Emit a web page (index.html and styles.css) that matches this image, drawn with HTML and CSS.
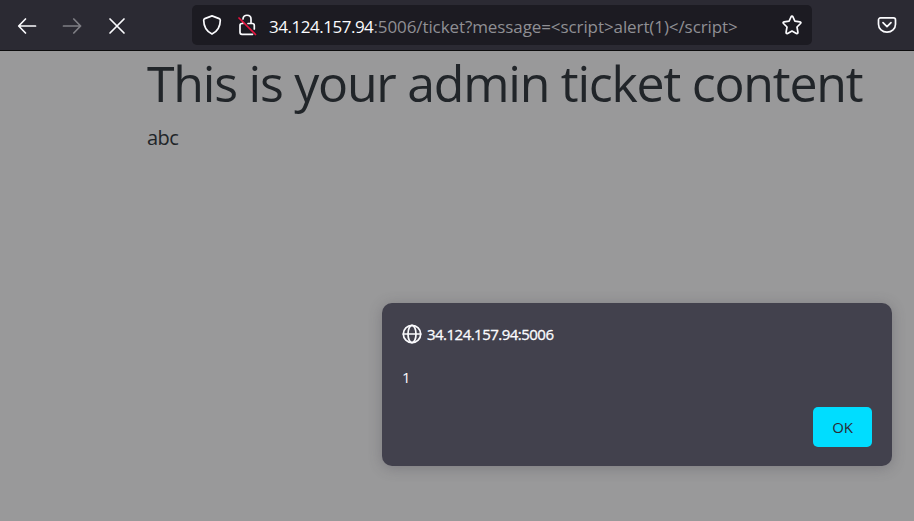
FILE: index.html
```html
<!DOCTYPE html>
<html lang="en">
<head>
<meta charset="utf-8">
<title>Ticket</title>
<link rel="stylesheet" href="styles.css">
</head>
<body>
<header class="toolbar">
  <nav class="nav">
    <svg class="icon" viewBox="0 0 20 20"><path d="M18.500 10H2M8.500 3L1.700 10l6.800 7"/></svg>
    <svg class="icon disabled" viewBox="0 0 20 20"><path d="M1.500 10h17M11.800 3l6.800 7-6.800 7"/></svg>
    <svg class="icon" viewBox="0 0 20 20"><path d="M3 3l14 14M17 3L3 17"/></svg>
  </nav>
  <div class="urlbar">
    <svg class="icon shield" viewBox="0 0 20 22"><path d="M10 1.9L17.2 4.6Q18.3 5 18.3 6.2C18.3 12.5 16 17 10 20.1C4 17 1.7 12.500 1.700 6.200Q1.700 5 2.800 4.600Z"/></svg>
    <svg class="icon lock" viewBox="0 0 20 22"><path d="M6 4.800V4.900C6 0 14 0 14 5v4.500h1.300a2 2 0 0 1 2 2V15M6 9.500H5a2 2 0 0 0-2 2v6.800a2 2 0 0 0 2 2h10.500M6 9.500V8.500M11 9.500h3"/><path class="slash" d="M2 4l16.500 16.500"/></svg>
    <span class="url"><b>34.124.157.94</b>:5006/ticket?message=&lt;script&gt;alert(1)&lt;/script&gt;</span>
    <svg class="icon star" viewBox="0 0 20 20"><path d="M10 1.200Q10.600 1.200 11 2l1.900 4.200 5 .6q1.700.4.6 1.700L15 12l.9 5.200q.1 1.800-1.500 1.200L10 16l-4.400 2.400q-1.600.6-1.500-1.200L5 12 1.500 8.500q-1.100-1.300.6-1.700l5-.6L9 2Q9.400 1.200 10 1.200Z"/></svg>
  </div>
  <svg class="icon pocket" viewBox="0 0 20 20"><path d="M3.500 2.900h13a2 2 0 0 1 2 2V9.200a8.500 8 0 0 1-17 0V4.900a2 2 0 0 1 2-2ZM6 7.700l4 4 4-4"/></svg>
</header>
<main class="page">
  <h1>This is your admin ticket content</h1>
  <p>abc</p>
</main>
<section class="dialog" role="alertdialog">
  <div class="origin">
    <svg class="icon globe" viewBox="0 0 20 20"><circle cx="10" cy="10" r="8.700"/><ellipse cx="10" cy="10" rx="4" ry="8.700"/><path d="M1.300 10h17.400"/></svg>
    <span class="host">34.124.157.94:5006</span>
  </div>
  <p class="message">1</p>
  <button class="ok">OK</button>
</section>
</body>
</html>
```
FILE: styles.css
```css
* { box-sizing: border-box; }
body {
  margin: 0;
  height: 521px;
  overflow: hidden;
  background: #99999a;
  color: #212529;
  font-family: "Open Sans", "Noto Sans", sans-serif;
}
.toolbar {
  display: flex;
  align-items: center;
  height: 51px;
  padding-left: 17px;
  background: #2b2a33;
  border-bottom: 1px solid #0c0c0d;
}
.icon {
  display: block;
  flex: none;
  width: 20px;
  height: 20px;
  fill: none;
  stroke: #fbfbfe;
  stroke-width: 1.7;
  stroke-linecap: round;
  stroke-linejoin: round;
}
.disabled { opacity: .4; }
.nav { display: flex; gap: 25px; width: 175px; padding-top: 2px; }
.urlbar {
  display: flex;
  align-items: center;
  width: 620px;
  height: 40px;
  padding: 0 10px;
  border-radius: 5px;
  background: #1c1b22;
}
.shield, .lock { height: 22px; }
.lock { margin-left: 15px; }
.slash { stroke: #e8133f; }
.url {
  flex: 1;
  margin: 3px 0 0 12px;
  font-size: 17px;
  line-height: 24px;
  letter-spacing: -.09px;
  white-space: nowrap;
  color: #8f8f94;
}
.url b { font-weight: 400; letter-spacing: -.48px; color: #fbfbfe; }
.pocket { margin-left: 65px; }
.page { padding: 2px 0 0 147px; }
h1 {
  margin: 0;
  font-size: 50px;
  font-weight: 400;
  line-height: 60px;
  letter-spacing: -1.23px;
  white-space: nowrap;
}
.page p { margin: 10px 0 0; font-size: 20px; line-height: 30px; letter-spacing: -.6px; }
.dialog {
  position: absolute;
  left: 382px;
  top: 303px;
  display: flex;
  flex-direction: column;
  width: 510px;
  height: 163px;
  padding: 20px 20px 19px;
  border-radius: 10px;
  background: #42414d;
  color: #fbfbfe;
  box-shadow: 0 2px 14px rgba(58, 57, 68, .3);
  font-size: 15px;
}
.origin { display: flex; align-items: center; gap: 5px; height: 21px; }
.host { letter-spacing: -.52px; -webkit-text-stroke: .3px #fbfbfe; }
.message { margin: 22px 0 0; line-height: 22px; }
.ok {
  flex: none;
  align-self: flex-end;
  width: 59px;
  height: 40px;
  margin-top: 19px;
  padding: 0;
  border: 0;
  border-radius: 5px;
  background: #00ddff;
  color: #2b2a33;
  font: 15px "Open Sans", "Noto Sans", sans-serif;
  letter-spacing: -.3px;
}
```
